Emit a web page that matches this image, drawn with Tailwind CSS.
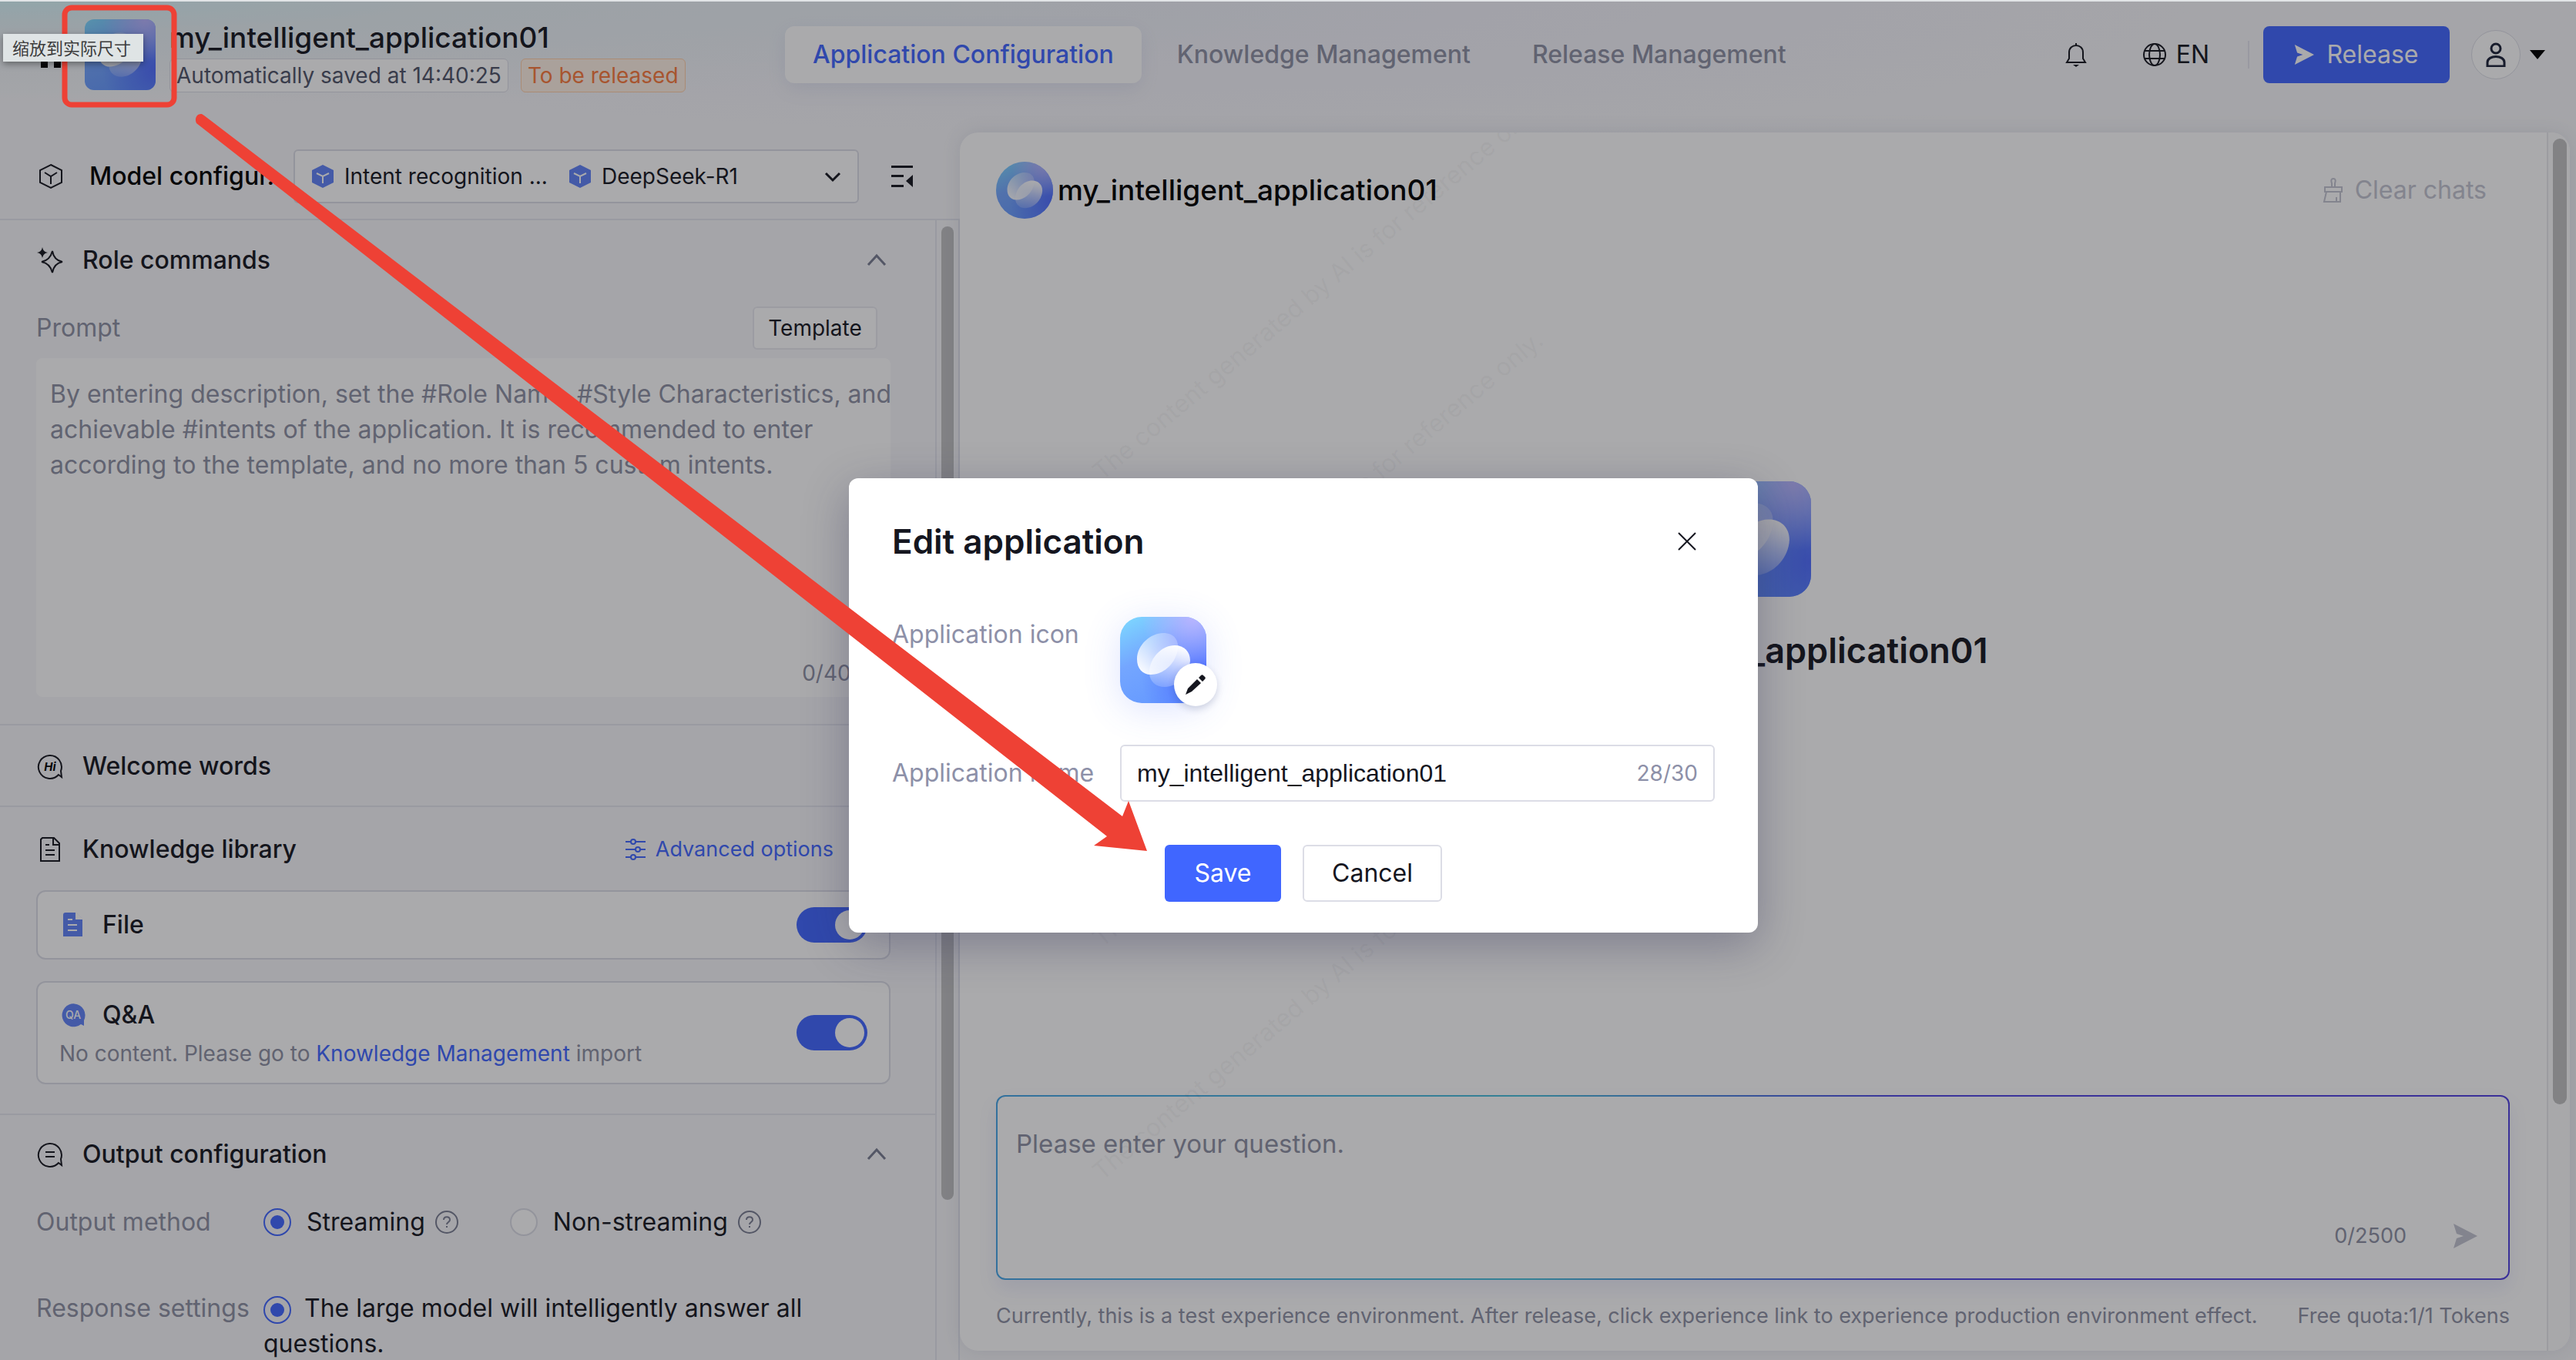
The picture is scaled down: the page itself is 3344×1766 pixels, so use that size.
<!DOCTYPE html>
<html lang="en">
<head>
  <meta charset="UTF-8" />
  <title>my_intelligent_application01</title>
  <script src="https://cdn.jsdelivr.net/npm/@tailwindcss/browser@4"></script>
</head>
<body class="relative flex flex-col h-screen overflow-hidden bg-[#f8f8fa] font-['Inter','Noto_Sans_CJK_SC',sans-serif] text-[32px] leading-[46px] text-[#15161f]">

  <!-- Shared symbols -->
  <svg class="absolute w-0 h-0" aria-hidden="true">
    <defs>
      <linearGradient id="logoBg" x1="0.1" y1="0" x2="0.6" y2="1">
        <stop offset="0" stop-color="#7dd6ff" />
        <stop offset="0.45" stop-color="#74a6ff" />
        <stop offset="1" stop-color="#6498ff" />
      </linearGradient>
      <radialGradient id="logoViolet" cx="0.85" cy="0" r="0.6">
        <stop offset="0" stop-color="#b9b4ff" />
        <stop offset="1" stop-color="#b9b4ff" stop-opacity="0" />
      </radialGradient>
      <radialGradient id="logoBlue" cx="1" cy="0.7" r="0.75">
        <stop offset="0" stop-color="#4f6cff" />
        <stop offset="1" stop-color="#4f6cff" stop-opacity="0" />
      </radialGradient>
      <linearGradient id="leafA" x1="1" y1="0" x2="0.1" y2="1">
        <stop offset="0" stop-color="#fff" stop-opacity="0.15" />
        <stop offset="1" stop-color="#fff" />
      </linearGradient>
      <linearGradient id="leafB" x1="0.7" y1="0" x2="0.4" y2="1">
        <stop offset="0" stop-color="#fff" />
        <stop offset="1" stop-color="#fff" stop-opacity="0.2" />
      </linearGradient>
    </defs>
    <symbol id="logo" viewBox="0 0 112 112">
      <rect width="112" height="112" fill="url(#logoBg)" />
      <rect width="112" height="112" fill="url(#logoBlue)" />
      <rect width="112" height="112" fill="url(#logoViolet)" />
      <path d="M22 55C22 36 40 21 56 21C69 21 76 29 75 40C74 58 58 75 40 75C29 75 22 67 22 55Z" fill="url(#leafA)" />
      <path d="M38 74C37 54 54 37 71 37C83 37 91 45 91 57C90 76 74 91 58 91C46 91 39 84 38 74Z" fill="url(#leafB)" />
    </symbol>
    <symbol id="cube" viewBox="0 0 32 32">
      <path d="M16 1L30 8V24L16 31L2 24V8Z" fill="#6083f8" />
      <path d="M8 12L16 16L24 12M16 16V25" fill="none" stroke="#fff" stroke-width="2" />
    </symbol>
    <symbol id="question" viewBox="0 0 32 32">
      <circle cx="16" cy="16" r="14" fill="none" stroke="currentColor" stroke-width="2" />
      <path d="M12 13C12 8 20 8 20 13C20 16 16 16 16 19M16 21V23" fill="none" stroke="currentColor" stroke-width="2" />
    </symbol>
    <symbol id="send" viewBox="0 0 32 32">
      <path d="M1 0L32 16L1 32L5 19L14 16L5 13Z" fill="currentColor" />
    </symbol>
  </svg>

  <div class="absolute inset-x-0 top-0 h-[240px] bg-[radial-gradient(ellipse_at_0%_0%,#d9f8fc_0%,#e9f2f6_12%,#eef2f800_40%),radial-gradient(ellipse_at_45%_0%,#f1f1fa_0%,#f4f2fc00_60%)]"></div>

  <!-- Header -->
  <header class="relative flex shrink-0 items-center h-[172px] pb-[30px] pl-[46px] pr-10">
    <a href="#" aria-label="Home" class="mr-6">
      <svg class="w-10 h-10" viewBox="0 0 40 40"><path d="M20 3L37 18H33V37H24V26H16V37H7V18H3Z" fill="#000" /></svg>
    </a>
    <svg class="w-[92px] h-[92px] rounded-xl mr-[18px]"><use href="#logo" /></svg>
    <div class="w-[799px] pt-1">
      <p class="text-[37px] leading-[46px] font-medium">my_intelligent_application01</p>
      <div class="flex gap-4 mt-1 text-[28px] leading-[42px]">
        <span class="border border-[#dcdde6] bg-white rounded-md px-2 text-[#4f5468]">Automatically saved at 14:40:25</span>
        <span class="border border-[#ffcfa8] bg-[#fff1e4] rounded-md px-2 text-[#fa7a3c]">To be released</span>
      </div>
    </div>
    <nav class="flex items-center font-medium whitespace-nowrap">
      <a href="#" class="bg-white rounded-xl px-9 py-[14px] text-[#4066ff] shadow-[0_8px_24px_#5060b01a]">Application Configuration</a>
      <a href="#" class="ml-[46px] text-[#8d90a3]">Knowledge Management</a>
      <a href="#" class="ml-20 text-[#8d90a3]">Release Management</a>
    </nav>
    <div class="flex items-center ml-auto">
      <button aria-label="Notifications">
        <svg class="w-8 h-8" viewBox="0 0 32 32" fill="none" stroke="#15161f" stroke-width="2"><path d="M16 1V4M4 26H28L25 21V13C25 1 7 1 7 13V21Z" /><path d="M12 29H20L16 32Z" fill="#15161f" stroke="none" /></svg>
      </button>
      <button class="flex items-center gap-3 ml-[70px]">
        <svg class="w-8 h-8" viewBox="0 0 32 32" fill="none" stroke="#15161f" stroke-width="2"><circle cx="16" cy="16" r="14" /><ellipse cx="16" cy="16" rx="7" ry="14" /><path d="M3 11H29M3 21H29" /></svg>
        EN
      </button>
      <span class="w-[2px] h-9 mx-[18px] ml-[50px] bg-[#e4e5ee]"></span>
      <button class="flex items-center justify-center gap-4 w-[242px] h-[74px] rounded-lg bg-[#4066ff] text-white">
        <svg class="w-[26px] h-[26px]"><use href="#send" /></svg>
        Release
      </button>
      <button class="flex items-center gap-3 ml-7" aria-label="Account">
        <span class="flex items-center justify-center w-16 h-16 rounded-full border border-[#dcdde6] bg-white">
          <svg class="w-8 h-8" viewBox="0 0 32 32" fill="none" stroke="#1c2238" stroke-width="3"><circle cx="16" cy="8" r="6" /><path d="M5 31V26C5 16 27 16 27 26V31Z" /></svg>
        </span>
        <svg class="w-5 h-3" viewBox="0 0 20 12"><path d="M0 0H20L10 12Z" fill="#000" /></svg>
      </button>
    </div>
  </header>

  <main class="relative flex flex-1 min-h-0">
    <!-- Configuration column -->
    <section class="flex flex-col w-[1246px] shrink-0">
      <div class="flex items-center shrink-0 h-[114px] pl-12 pt-[2px] border-b-2 border-[#e4e6ee]">
        <svg class="w-9 h-9 shrink-0" viewBox="0 0 36 36" fill="none" stroke="#15161f" stroke-width="2"><path d="M18 3L32 10V26L18 33L4 26V10Z" /><path d="M10 13L18 18L26 13M18 18V28" /></svg>
        <h2 class="w-[265px] pl-8 font-medium whitespace-nowrap text-black">Model configur...</h2>
        <div class="flex items-center w-[734px] h-[70px] ml-8 px-5 rounded-md border-2 border-[#dcdde6] bg-white text-[28px]">
          <svg class="w-8 h-8"><use href="#cube" /></svg>
          <select aria-label="Intent model" class="appearance-none w-[302px] pl-3"><option>Intent recognition ...</option></select>
          <svg class="w-8 h-8"><use href="#cube" /></svg>
          <select aria-label="Answer model" class="appearance-none flex-1 pl-3"><option>DeepSeek-R1</option></select>
          <svg class="w-6 h-6" viewBox="0 0 24 24" fill="none" stroke="#15161f" stroke-width="3"><path d="M3 8L12 17L21 8" /></svg>
        </div>
        <button class="ml-10" aria-label="Collapse panel">
          <svg class="w-8 h-8" viewBox="0 0 32 32"><path d="M2 2H30V5H2ZM2 14H18V17H2ZM2 27H18V30H2Z M30 14V30L21 22Z" fill="#15161f" /></svg>
        </button>
      </div>

      <div class="flex flex-1 min-h-0">
        <div class="flex-1 overflow-hidden">
          <div class="h-[656px] pl-[47px] pr-[58px] pt-[29px] border-b-2 border-[#e4e6ee]">
            <div class="flex items-center">
              <svg class="w-9 h-9 mr-6" viewBox="0 0 36 36"><path d="M21 6Q23 18 34 20Q23 22 21 34Q18 22 7 20Q18 18 21 6Z" fill="none" stroke="#15161f" stroke-width="2" /><path d="M8 1Q9 7 15 8Q9 9 8 15Q7 9 1 8Q7 7 8 1Z" fill="#15161f" /></svg>
              <h2 class="font-medium">Role commands</h2>
              <svg class="w-7 h-7 ml-auto mr-1" viewBox="0 0 28 28" fill="none" stroke="#797d92" stroke-width="3"><path d="M3 20L14 8L25 20" /></svg>
            </div>
            <div class="flex items-center justify-between mt-[37px] pr-[17px] text-[#8d90a3]">
              <label for="prompt">Prompt</label>
              <button class="w-[162px] h-[56px] rounded-md border-2 border-[#e9eaf0] bg-white text-[28px] text-[#15161f]">Template</button>
            </div>
            <div class="relative mt-[11px] rounded-lg bg-white">
              <textarea id="prompt" class="block w-[1120px] h-[440px] resize-none pt-6 pl-[18px] placeholder:text-[#8d90a3]" placeholder="By entering description, set the #Role Name, #Style Characteristics, and achievable #intents of the application. It is recommended to enter according to the template, and no more than 5 custom intents."></textarea>
              <span class="absolute right-4 bottom-2 text-[28px] text-[#8d90a3]">0/4000</span>
            </div>
          </div>

          <div class="flex items-center h-[106px] pl-[47px] pr-[58px] pt-[2px] border-b-2 border-[#e4e6ee]">
            <svg class="w-9 h-9 mr-6" viewBox="0 0 36 36"><path d="M29 29A15 15 0 1 1 32 24L33 32Z" fill="none" stroke="#15161f" stroke-width="2" /><text x="18" y="24" text-anchor="middle" font-size="15" font-weight="700" font-style="italic">Hi</text></svg>
            <h2 class="font-medium">Welcome words</h2>
          </div>

          <div class="h-[400px] pl-[47px] pr-[58px] pt-8 border-b-2 border-[#e4e6ee]">
            <div class="flex items-center">
              <svg class="w-9 h-9 mr-6" viewBox="0 0 36 36" fill="none" stroke="#15161f" stroke-width="2"><path d="M8 3H23L30 10V33H6V5Z M22 4V12H30" /><path d="M12 12H17M12 19H24M12 25H24" /></svg>
              <h2 class="font-medium">Knowledge library</h2>
              <a href="#" class="flex items-center gap-3 ml-auto mr-[74px] text-[27px] text-[#4066ff]">
                <svg class="w-7 h-7" viewBox="0 0 28 28" fill="none" stroke="#4066ff" stroke-width="2"><path d="M1 4H8M14 4H27M1 14H14M20 14H27M1 24H8M14 24H27" /><circle cx="11" cy="4" r="3" /><circle cx="17" cy="14" r="3" /><circle cx="11" cy="24" r="3" /></svg>
                Advanced options
              </a>
            </div>
            <div class="flex items-center justify-between h-[90px] mt-[30px] pl-7 pr-7 rounded-xl border-2 border-[#dcdde6] bg-white">
              <label for="file" class="flex items-center gap-5 font-medium">
                <svg class="w-9 h-9" viewBox="0 0 36 36"><path d="M8 2H22L30 10V33H5V5Q5 2 8 2Z" fill="#6083f8" /><path d="M22 3L29 10H22ZM11 11H17M11 18H23M11 25H23" fill="#fff" stroke="#fff" stroke-width="2" /></svg>
                File
              </label>
              <input id="file" type="checkbox" checked class="appearance-none w-[92px] h-[46px] p-1 rounded-full bg-[#4066ff] before:block before:w-[38px] before:h-[38px] before:ml-auto before:rounded-full before:bg-white" />
            </div>
            <div class="flex items-center justify-between h-[134px] mt-7 pl-7 pr-7 rounded-xl border-2 border-[#dcdde6] bg-white">
              <div class="pt-1">
                <label for="qa" class="flex items-center gap-5 font-medium">
                  <svg class="w-9 h-9" viewBox="0 0 36 36"><path d="M28 30A15 15 0 1 1 32 25L32 32Z" fill="#6083f8" /><text x="18" y="23" text-anchor="middle" font-size="14" fill="#fff">QA</text></svg>
                  Q&amp;A
                </label>
                <p class="mt-1 text-[28px] text-[#8d90a3]">No content. Please go to <a href="#" class="text-[#4066ff]">Knowledge Management</a> import</p>
              </div>
              <input id="qa" type="checkbox" checked class="appearance-none w-[92px] h-[46px] p-1 rounded-full bg-[#4066ff] before:block before:w-[38px] before:h-[38px] before:ml-auto before:rounded-full before:bg-white" />
            </div>
          </div>

          <div class="pl-[47px] pr-[58px] pt-7">
            <div class="flex items-center">
              <svg class="w-9 h-9 mr-6" viewBox="0 0 36 36" fill="none" stroke="#15161f" stroke-width="2"><path d="M29 29A15 15 0 1 1 32 24L33 32Z" /><path d="M12 15H24M12 21H24" /></svg>
              <h2 class="font-medium">Output configuration</h2>
              <svg class="w-7 h-7 ml-auto mr-1" viewBox="0 0 28 28" fill="none" stroke="#797d92" stroke-width="3"><path d="M3 20L14 8L25 20" /></svg>
            </div>
            <fieldset class="flex items-center mt-[42px]">
              <span class="w-[295px] text-[#8d90a3]">Output method</span>
              <input id="stream" name="output" type="radio" checked class="appearance-none w-9 h-9 p-[7px] mr-5 rounded-full border-2 border-[#4066ff] before:block before:w-[18px] before:h-[18px] before:rounded-full before:bg-[#4066ff]" />
              <label for="stream">Streaming</label>
              <svg class="w-8 h-8 ml-3 mr-[66px] text-[#797d92]"><use href="#question" /></svg>
              <input id="nonstream" name="output" type="radio" class="appearance-none w-9 h-9 mr-5 rounded-full border-2 border-[#dcdde6] bg-white" />
              <label for="nonstream">Non-streaming</label>
              <svg class="w-8 h-8 ml-3 text-[#797d92]"><use href="#question" /></svg>
            </fieldset>
            <fieldset class="flex mt-[66px]">
              <span class="w-[295px] shrink-0 whitespace-nowrap text-[#8d90a3]">Response settings</span>
              <div>
                <input id="smart" name="response" type="radio" checked class="appearance-none align-middle w-9 h-9 p-[7px] mr-2 rounded-full border-2 border-[#4066ff] before:block before:w-[18px] before:h-[18px] before:rounded-full before:bg-[#4066ff]" />
                <label for="smart">The large model will intelligently answer all questions.</label>
              </div>
            </fieldset>
          </div>
        </div>
        <div class="w-8 shrink-0 border-x-2 border-[#e4e6ee] px-[6px] pt-2">
          <div class="w-4 h-[1264px] rounded-full bg-[#c0c0c1]"></div>
        </div>
      </div>
    </section>

    <!-- Chat preview -->
    <section class="relative flex flex-1 min-w-0 mr-2 mb-3 rounded-[24px] bg-white overflow-hidden shadow-[0_0_24px_#40508020]">
      <div class="flex flex-col flex-1 min-w-0 pl-[47px] pr-12 pt-[38px]">
        <div class="flex items-center">
          <svg class="w-[74px] h-[74px] rounded-full mr-[6px]"><use href="#logo" /></svg>
          <h1 class="text-[37px] font-medium text-black">my_intelligent_application01</h1>
          <button class="flex items-center gap-3 ml-auto mr-[30px] text-[#c2c4d0]">
            <svg class="w-8 h-8" viewBox="0 0 32 32" fill="none" stroke="#c2c4d0" stroke-width="2"><path d="M14 12V7Q12 1 16 1Q20 1 18 7V12M5 12H27V18H5ZM7 18L4 31H25V18M20 31V25" /></svg>
            Clear chats
          </button>
        </div>
        <div class="flex flex-col items-center flex-1 pt-[341px]">
          <svg class="w-[150px] h-[150px] rounded-[28px]"><use href="#logo" /></svg>
          <p class="mt-11 text-[45px] leading-[52px] font-semibold">my_intelligent_application01</p>
        </div>
        <div class="p-[2px] rounded-xl bg-[linear-gradient(90deg,#46a6e8_0%,#49c0dc_35%,#5046e4_60%,#5040e0_100%)] shadow-[0_12px_24px_#4f5cc81c]">
          <div class="h-[236px] rounded-[10px] bg-white px-6 pt-[38px]">
            <textarea aria-label="Question" class="block w-full h-[120px] resize-none text-[33px] placeholder:text-[#8d90a3]" placeholder="Please enter your question."></textarea>
            <div class="flex items-center justify-end gap-[60px] pr-4">
              <span class="text-[27px] text-[#8d90a3]">0/2500</span>
              <button aria-label="Send" class="text-[#c2c4d0]"><svg class="w-8 h-8"><use href="#send" /></svg></button>
            </div>
          </div>
        </div>
        <div class="flex justify-between mt-6 mb-[22px] text-[27px] text-[#8d90a3] whitespace-nowrap">
          <span>Currently, this is a test experience environment. After release, click experience link to experience production environment effect.</span>
          <span>Free quota:1/1 Tokens</span>
        </div>
      </div>
      <div class="w-[30px] shrink-0 border-l-2 border-[#e9eaee] bg-[#fcfcfc] px-[6px] pt-2">
        <div class="w-[18px] h-[1254px] rounded-full bg-[#c0c0c1]"></div>
      </div>

      <!-- Watermark -->
      <div class="absolute inset-0 pointer-events-none text-[32px] leading-[40px] whitespace-nowrap text-black/5">
        <span class="absolute left-[190px] top-[420px] origin-bottom-left -rotate-40">The content generated by AI is for reference only.</span>
        <span class="absolute left-[190px] top-[723px] origin-bottom-left -rotate-40">The content generated by AI is for reference only.</span>
        <span class="absolute left-[190px] top-[1026px] origin-bottom-left -rotate-40">The content generated by AI is for reference only.</span>
        <span class="absolute left-[190px] top-[1329px] origin-bottom-left -rotate-40">The content generated by AI is for reference only.</span>
      </div>
    </section>
  </main>

  <!-- Edit dialog -->
  <div class="absolute inset-0 flex items-center justify-center pl-10 pt-16 border-t-2 border-[#e1e4e6] bg-[#131318]/36">
    <form class="w-[1180px] rounded-xl bg-white px-14 pt-[54px] pb-10 shadow-[0_16px_60px_#28285055]">
      <div class="flex items-center justify-between">
        <h2 class="text-[44px] leading-[56px] font-semibold">Edit application</h2>
        <button type="button" aria-label="Close" class="mr-6">
          <svg class="w-6 h-6" viewBox="0 0 24 24" fill="none" stroke="#15161f" stroke-width="2"><path d="M1 1L23 23M23 1L1 23" /></svg>
        </button>
      </div>
      <div class="flex mt-[70px]">
        <span class="w-[296px] text-[#8d90a8]">Application icon</span>
        <div class="relative w-[112px] h-[112px] rounded-[28px] shadow-[0_8px_48px_#5070ff30]">
          <svg class="w-[112px] h-[112px] rounded-[28px]"><use href="#logo" /></svg>
          <button type="button" aria-label="Change icon" class="absolute -right-[14px] -bottom-1 flex items-center justify-center w-14 h-14 rounded-full bg-white shadow-[0_4px_10px_#20306030]">
            <svg class="w-7 h-7" viewBox="0 0 28 28" fill="#15161f"><path d="M1 27L4 19L16 7L21 12L9 23Z" /><path d="M18 5L21 2Q23 0 25 3Q28 5 26 7L23 10Z" /></svg>
          </button>
        </div>
      </div>
      <div class="flex items-center mt-[54px]">
        <label for="appname" class="w-[296px] text-[#8d90a8]">Application name</label>
        <div class="flex items-center flex-1 h-[74px] px-5 rounded-md border-2 border-[#dcdde6]">
          <input id="appname" type="text" value="my_intelligent_application01" class="flex-1 font-['Liberation_Sans',sans-serif] text-[32px]" />
          <span class="text-[28px] text-[#8d90a8]">28/30</span>
        </div>
      </div>
      <div class="flex justify-center gap-7 mt-14">
        <button type="button" class="w-[151px] h-[74px] rounded-md bg-[#4066ff] text-white">Save</button>
        <button type="button" class="w-[181px] h-[74px] rounded-md border-2 border-[#dcdde6]">Cancel</button>
      </div>
    </form>
  </div>

  <!-- Annotations -->
  <svg class="absolute left-0 top-0 w-[1520px] h-[1140px] pointer-events-none" viewBox="0 0 1520 1140">
    <rect x="84" y="10" width="142" height="126" rx="9" fill="none" stroke="#ee4135" stroke-width="7" />
    <path d="M255 160C251 152 259 144 265 150L1457 1060L1465 1040L1489 1105L1420 1098L1437 1086Z" fill="#ee4135" />
  </svg>
  <div role="tooltip" class="absolute left-1 top-11 h-9 px-3 pr-4 bg-[#dfe4e5] text-[22px] leading-[34px] text-[#3c3c3c] font-['Noto_Sans_CJK_SC',sans-serif] shadow-[0_3px_8px_#00000060]">缩放到实际尺寸</div>

</body>
</html>
